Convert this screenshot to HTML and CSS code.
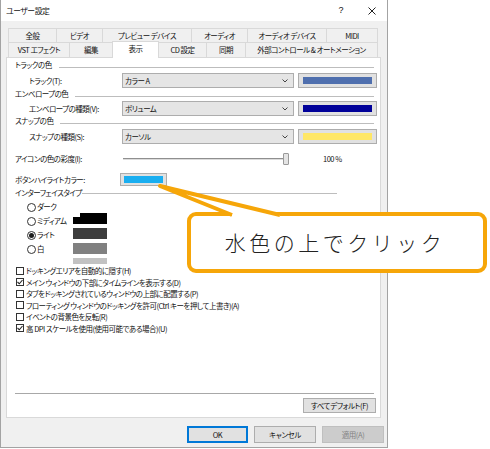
FILE: index.html
```html
<!DOCTYPE html>
<html lang="ja">
<head>
<meta charset="utf-8">
<title>ユーザー設定</title>
<link rel="stylesheet" href="styles.css">
</head>
<body>
<div class="dialog">
  <div class="titlebar">
    <span class="title">ユーザー設定</span>
    <span class="help">?</span>
    <svg class="close" width="8" height="8" viewBox="0 0 8 8"><path d="M0.5 0.5 L7.5 7.5 M7.5 0.5 L0.5 7.5" stroke="#222" stroke-width="1" fill="none"/></svg>
  </div>
  <div class="main">
    <div class="tabs">
      <div class="tabrow row1">
        <div class="tab w49">全般</div>
        <div class="tab w46">ビデオ</div>
        <div class="tab w89">プレビュー デバイス</div>
        <div class="tab w56">オーディオ</div>
        <div class="tab w79">オーディオ デバイス</div>
        <div class="tab w51">MIDI</div>
      </div>
      <div class="tabrow row2">
        <div class="tab w62">VST エフェクト</div>
        <div class="tab w43">編集</div>
        <div class="tab active">表示</div>
        <div class="tab w48">CD 設定</div>
        <div class="tab w39">同期</div>
        <div class="tab w132">外部コントロール &amp; オートメーション</div>
      </div>
    </div>
    <div class="panel">
      <div class="grp">トラックの色</div>
      <div class="crow gap3">
        <span class="clabel">トラック(T):</span>
        <div class="combo"><span>カラー A</span><svg width="6" height="4" viewBox="0 0 6 4"><path d="M0.5 0.5 L3 3 L5.5 0.5" stroke="#444" fill="none"/></svg></div>
        <div class="swatch"><i class="c-track"></i></div>
      </div>
      <div class="grp gap1">エンベロープの色</div>
      <div class="crow gap2">
        <span class="clabel">エンベロープの種類(V):</span>
        <div class="combo"><span>ボリューム</span><svg width="6" height="4" viewBox="0 0 6 4"><path d="M0.5 0.5 L3 3 L5.5 0.5" stroke="#444" fill="none"/></svg></div>
        <div class="swatch"><i class="c-env"></i></div>
      </div>
      <div class="grp">スナップの色</div>
      <div class="crow gap3">
        <span class="clabel">スナップの種類(S):</span>
        <div class="combo"><span>カーソル</span><svg width="6" height="4" viewBox="0 0 6 4"><path d="M0.5 0.5 L3 3 L5.5 0.5" stroke="#444" fill="none"/></svg></div>
        <div class="swatch"><i class="c-snap"></i></div>
      </div>
      <div class="srow">
        <span class="slabel">アイコンの色の彩度(I):</span>
        <div class="slider"><span class="track"></span><span class="thumb"></span></div>
        <span class="pct">100 %</span>
      </div>
      <div class="hrow">
        <span class="slabel">ボタンハイライトカラー:</span>
        <div class="hswatch"><i></i></div>
      </div>
      <div class="grp grp-iface">インターフェイスタイプ</div>
      <div class="iface">
        <div class="radios">
          <div class="radio"><i></i>ダーク</div>
          <div class="radio"><i></i>ミディアム</div>
          <div class="radio on"><i></i>ライト</div>
          <div class="radio"><i></i>白</div>
        </div>
        <div class="previews">
          <span class="pv pv-dark"></span>
          <span class="pv pv-medium"></span>
          <span class="pv pv-light"></span>
          <span class="pv pv-white"></span>
        </div>
      </div>
      <div class="checks">
        <div class="chk"><i></i>ドッキングエリアを自動的に隠す(H)</div>
        <div class="chk on"><i><svg width="6" height="6" viewBox="0 0 6 6"><path d="M0.5 3 L2.3 4.8 L5.5 1" stroke="#222" stroke-width="1.1" fill="none"/></svg></i>メイン ウィンドウの下部にタイムラインを表示する(D)</div>
        <div class="chk"><i></i>タブをドッキングされているウィンドウの上部に配置する(P)</div>
        <div class="chk"><i></i>フローティング ウィンドウのドッキングを許可(Ctrl キーを押して上書き)(A)</div>
        <div class="chk"><i></i>イベントの背景色を反転(R)</div>
        <div class="chk on"><i><svg width="6" height="6" viewBox="0 0 6 6"><path d="M0.5 3 L2.3 4.8 L5.5 1" stroke="#222" stroke-width="1.1" fill="none"/></svg></i>高 DPI スケールを使用(使用可能である場合)(U)</div>
      </div>
      <div class="sep"></div>
      <div class="defrow"><button class="btn btn-def">すべてデフォルト(F)</button></div>
    </div>
    <div class="footer">
      <button class="btn btn-ok">OK</button>
      <button class="btn btn-cancel">キャンセル</button>
      <button class="btn btn-apply">適用(A)</button>
    </div>
  </div>
</div>
<div class="callout">水色の上でクリック</div>
<svg class="tail" width="140" height="47" viewBox="0 0 140 47">
  <polygon points="10,11 82,39 82,42 130,42 130,39" fill="#fff"/>
  <polyline points="82,40 10,11 130,40" fill="none" stroke="#f6a609" stroke-width="4" stroke-linejoin="round"/>
</svg>
</body>
</html>
```
FILE: styles.css
```css
* { box-sizing: border-box; }
html, body { margin: 0; padding: 0; background: #fff; }
body {
  font-family: "Noto Sans CJK JP", "Noto Sans", sans-serif;
  font-size: 7.5px;
  letter-spacing: -0.5px;
  line-height: 1;
  color: #111;
  font-feature-settings: "palt";
}

.dialog {
  width: 388px;
  height: 448px;
  border: 1px solid #a3a3a3;
  border-top: none;
  background: #f0f0f0;
  display: flex;
  flex-direction: column;
}

.titlebar {
  height: 21px;
  flex: none;
  background: #fff;
  display: flex;
  align-items: center;
  padding-left: 5px;
}
.title { flex: 1; font-size: 7.8px; letter-spacing: -0.4px; }
.help { font-size: 9px; margin-right: 25px; font-family: "Liberation Sans", sans-serif; }
.close { margin-right: 11px; }

.main {
  flex: 1;
  display: flex;
  flex-direction: column;
  padding: 7px 6px 4px 5px;
}

.tabs { margin-left: 2px; width: 370px; flex: none; }
.tabrow { display: flex; align-items: flex-start; }
.row1 { height: 14px; }
.row2 { height: 15px; }
.tab {
  height: 100%;
  flex: none;
  display: flex;
  align-items: center;
  justify-content: center;
  white-space: nowrap;
  border-top: 1px solid #d9d9d9;
  border-right: 1px solid #d9d9d9;
}
.tab:first-child { border-left: 1px solid #d9d9d9; }
.tab.active {
  width: 47px;
  height: 17px;
  margin-top: -1px;
  margin-left: -1px;
  border-left: 1px solid #d9d9d9;
  background: #fff;
  position: relative;
  z-index: 1;
  padding-bottom: 2px;
}
.w39 { width: 39px; }
.w43 { width: 43px; }
.w46 { width: 46px; }
.w48 { width: 48px; }
.w49 { width: 49px; }
.w51 { width: 51px; }
.w56 { width: 56px; }
.w62 { width: 62px; }
.w79 { width: 79px; }
.w89 { width: 89px; }
.w132 { width: 132px; }

.panel {
  flex: none;
  height: 361px;
  border: 1px solid #d9d9d9;
  background: #fff;
  padding: 2px 6px 4px 8px;
  display: flex;
  flex-direction: column;
}

.grp {
  height: 10px;
  flex: none;
  display: flex;
  align-items: center;
  white-space: nowrap;
}
.grp::after {
  content: "";
  flex: 1;
  height: 1px;
  background: #bdbdbd;
  margin-left: 7px;
  margin-top: 4px;
}
.grp-iface { width: 322px; margin-top: 2px; }
.grp-iface::after { margin-left: 0; margin-top: 1px; }
.gap1 { margin-top: 1px; }
.gap2 { margin-top: 2px; }
.gap3 { margin-top: 3px; }

.crow {
  flex: none;
  height: 15px;
  display: grid;
  grid-template-columns: 103px 172px 79px;
  column-gap: 4px;
}
.clabel { padding-left: 14px; display: flex; align-items: center; white-space: nowrap; }
.combo {
  background: #e5e5e5;
  border: 1px solid #adadad;
  display: flex;
  align-items: center;
  justify-content: space-between;
  padding: 0 5px 0 2px;
}
.swatch {
  background: #e1e1e1;
  border: 1px solid #adadad;
  padding: 3px 4px;
  display: flex;
}
.swatch i { flex: 1; }
.c-track { background: #4f6fae; }
.c-env { background: #000099; }
.c-snap { background: #ffe766; }

.srow {
  flex: none;
  height: 14px;
  margin-top: 8px;
  display: flex;
  align-items: center;
}
.slabel { width: 108px; flex: none; white-space: nowrap; }
.slider { display: flex; align-items: center; width: 166px; }
.track {
  width: 164px;
  height: 2px;
  border-top: 1px solid #8f8f8f;
  background: #dcdcdc;
}
.thumb {
  width: 6px;
  height: 12px;
  margin-left: -4px;
  background: #e4e4e4;
  border: 1px solid #9a9a9a;
  border-radius: 1px;
}
.pct { margin-left: 34px; }

.hrow {
  flex: none;
  height: 13px;
  margin-top: 7px;
  display: flex;
  align-items: center;
}
.hrow .slabel { width: 105px; }
.hswatch {
  width: 47px;
  height: 13px;
  background: #e1e1e1;
  border: 1px solid #adadad;
  padding: 2px 3px;
  display: flex;
}
.hswatch i { flex: 1; background: #1aaef0; }

.iface {
  flex: none;
  height: 64px;
  margin-top: 2px;
  display: flex;
}
.radios { padding-left: 12px; width: 58px; }
.radio { height: 14px; display: flex; align-items: center; white-space: nowrap; }
.radio i {
  width: 9px;
  height: 9px;
  border: 1px solid #333;
  border-radius: 50%;
  background: #fff;
  margin-right: 1px;
  display: flex;
  align-items: center;
  justify-content: center;
}
.radio.on i::after {
  content: "";
  width: 5px;
  height: 5px;
  border-radius: 50%;
  background: #1f1f1f;
}
.previews { padding-top: 13px; display: flex; flex-direction: column; gap: 4px; }
.pv { display: block; width: 34px; height: 11px; }
.pv-dark { background: #000; clip-path: polygon(7px 0, 100% 0, 100% 100%, 0 100%, 0 4px, 7px 4px); }
.pv-medium { background: #3d3d3d; }
.pv-light { background: #808080; }
.pv-white { background: #c2c2c2; height: 6px; }

.checks { flex: none; margin-top: 1px; }
.chk { height: 11.5px; display: flex; align-items: center; padding-left: 1px; white-space: nowrap; }
.chk i {
  width: 8px;
  height: 8px;
  border: 1px solid #333;
  margin-right: 2px;
  flex: none;
  display: flex;
  align-items: center;
  justify-content: center;
}

.sep {
  margin-top: auto;
  flex: none;
  height: 2px;
  border-top: 1px solid #a8a8a8;
  border-bottom: 1px solid #fff;
}
.defrow { display: flex; justify-content: flex-end; margin-top: 3px; margin-right: -2px; }

.btn {
  font-family: inherit;
  font-size: 7.5px;
  letter-spacing: -0.4px;
  font-feature-settings: "palt";
  color: #111;
  background: #e1e1e1;
  border: 1px solid #adadad;
  padding: 0;
  margin: 0;
  line-height: 1;
  white-space: nowrap;
}
.btn-def { width: 73px; height: 15px; }

.footer {
  flex: none;
  display: flex;
  justify-content: flex-end;
  gap: 6px;
  margin-top: 8px;
  margin-right: -3px;
}
.footer .btn { height: 17px; }
.btn-ok { width: 61px; border-color: #0078d7; box-shadow: inset 0 0 0 1px #0078d7; }
.btn-cancel { width: 62px; }
.btn-apply { width: 62px; background: #cccccc; border-color: #bfbfbf; color: #838383; }

.callout {
  position: absolute;
  left: 187px;
  top: 212px;
  width: 300px;
  height: 61px;
  border: 4px solid #f6a609;
  border-radius: 9px;
  background: #fff;
  display: flex;
  align-items: center;
  justify-content: center;
  padding-right: 4px;
  font-size: 21px;
  font-weight: 300;
  letter-spacing: 3.5px;
  color: #222;
  font-feature-settings: normal;
}
.tail { position: absolute; left: 150px; top: 175px; }
```
